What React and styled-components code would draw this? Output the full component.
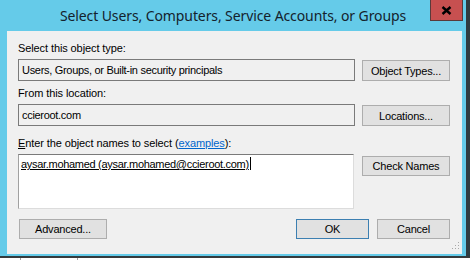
import React from "react";
import styled, { createGlobalStyle } from "styled-components";

const Global = createGlobalStyle`
  html, body { margin: 0; padding: 0; background: #ffffff; }
  body { font-family: "Liberation Sans", Arial, sans-serif; }
  #root { width: 470px; height: 260px; overflow: hidden; }
`;

const Desktop = styled.div`
  width: 470px;
  height: 260px;
  display: flex;
  flex-direction: column;
  background: #ffffff;
  overflow: hidden;
`;

const TopArea = styled.div`
  display: flex;
  height: 257px;
  background: #2f3b40;
`;

const BottomStrip = styled.div`
  flex: 1;
  background: #ffffff;
  border-top: 1px solid #3a3a3a;
  display: flex;
`;

const StripMark = styled.div`
  width: ${p => p.$w}px;
  margin-left: ${p => p.$ml}px;
  border-left: 1px solid #a0a0a0;
`;

const Window = styled.div`
  width: 466px;
  height: 256px;
  background: #65cbe9;
  display: flex;
  flex-direction: column;
  padding: 0 4px 2px 7px;
  box-sizing: border-box;
`;

const TitleBar = styled.div`
  position: relative;
  height: 31px;
  display: flex;
  align-items: center;
  justify-content: center;
  margin-left: -7px;
  margin-right: -4px;
`;

const Title = styled.div`
  font-family: "Noto Sans", "Open Sans", sans-serif;
  font-size: 14px;
  color: #14222c;
  letter-spacing: -0.1px;
`;

const CloseButton = styled.div`
  position: absolute;
  top: 0;
  right: 3px;
  width: 33px;
  height: 21px;
  box-sizing: border-box;
  background: #c75050;
  border: 1px solid #5a3a3a;
  border-top: none;
  display: flex;
  align-items: center;
  justify-content: center;
`;

const Panel = styled.div`
  flex: 1;
  background: #f0f0f0;
  padding: 11px 12px 0 11px;
  display: flex;
  flex-direction: column;
  font-size: 11px;
  letter-spacing: -0.3px;
  color: #000;
`;

const Label = styled.div`
  height: 13px;
  line-height: 13px;
  letter-spacing: -0.1px;
  margin-top: ${p => p.$mt || 0}px;
  white-space: nowrap;
`;

const Row = styled.div`
  display: flex;
  align-items: flex-start;
  gap: 7px;
  margin-top: ${p => p.$mt || 0}px;
`;

const Field = styled.div`
  width: 337px;
  height: 22px;
  box-sizing: border-box;
  border: 1px solid #7a7a7a;
  background: #f0f0f0;
  padding-left: 3px;
  line-height: 20px;
  white-space: nowrap;
`;

const NamesBox = styled.div`
  width: 336px;
  height: 55px;
  box-sizing: border-box;
  background: #ffffff;
  border-top: 1px solid #7a7a7a;
  border-left: 1px solid #a0a0a0;
  border-right: 1px solid #dcdcdc;
  border-bottom: 1px solid #dcdcdc;
  padding: 2px 0 0 2px;
  line-height: 14px;
  white-space: nowrap;
`;

const Resolved = styled.span`
  text-decoration: underline;
  text-underline-offset: 1px;
`;

const Caret = styled.span`
  display: inline-block;
  width: 1px;
  height: 13px;
  background: #000;
  vertical-align: -2px;
  margin-left: 1px;
`;

const Button = styled.div`
  width: ${p => p.$w || 88}px;
  height: ${p => p.$h || 21}px;
  box-sizing: border-box;
  background: #e1e1e1;
  border: 1px solid ${p => (p.$default ? "#3c7fb1" : "#adadad")};
  display: flex;
  align-items: center;
  justify-content: center;
  letter-spacing: -0.2px;
  margin-top: ${p => p.$mt || 0}px;
  margin-left: ${p => p.$ml || 0}px;
  white-space: nowrap;
`;

const Underline = styled.span`
  text-decoration: underline;
`;

const Link = styled.span`
  color: #0066cc;
  text-decoration: underline;
`;

const BottomRow = styled.div`
  display: flex;
  align-items: flex-end;
  margin-top: 10px;
  position: relative;
  height: 20px;
`;

const Spacer = styled.div`
  flex: 1;
`;

const ButtonGroup = styled.div`
  display: flex;
  gap: 8px;
`;

const Grip = styled.svg`
  position: absolute;
  right: -10px;
  bottom: -11px;
`;

export default function App() {
  return (
    <>
      <Global />
      <Desktop>
        <TopArea>
          <Window>
            <TitleBar>
              <Title>Select Users, Computers, Service Accounts, or Groups</Title>
              <CloseButton>
                <svg width="11" height="9" viewBox="0 0 11 9">
                  <path d="M1.5 1 L9.5 8 M9.5 1 L1.5 8" stroke="#000" strokeWidth="2.4" />
                </svg>
              </CloseButton>
            </TitleBar>
            <Panel>
              <Label>Select this object type:</Label>
              <Row $mt={4}>
                <Field>Users, Groups, or Built-in security principals</Field>
                <Button $mt={1}>Object Types...</Button>
              </Row>
              <Label $mt={6}>From this location:</Label>
              <Row $mt={4}>
                <Field>ccieroot.com</Field>
                <Button $mt={1}>Locations...</Button>
              </Row>
              <Label $mt={11}>
                <Underline>E</Underline>nter the object names to select (<Link>examples</Link>):
              </Label>
              <Row $mt={4}>
                <NamesBox>
                  <Resolved>aysar.mohamed (aysar.mohamed@ccieroot.com)</Resolved>
                  <Caret />
                </NamesBox>
                <Button $mt={2} $h={20} $ml={1}>Check Names</Button>
              </Row>
              <BottomRow>
                <Button $h={20} $ml={1}>Advanced...</Button>
                <Spacer />
                <ButtonGroup>
                  <Button $w={73} $h={20} $default>OK</Button>
                  <Button $w={73} $h={20}>Cancel</Button>
                </ButtonGroup>
                <Grip width="8" height="8" viewBox="0 0 8 8">
                  <rect x="6" y="0" width="1" height="1" fill="#a8a8a8" />
                  <rect x="3" y="3" width="1" height="1" fill="#a8a8a8" />
                  <rect x="6" y="3" width="1" height="1" fill="#a8a8a8" />
                  <rect x="0" y="6" width="1" height="1" fill="#a8a8a8" />
                  <rect x="3" y="6" width="1" height="1" fill="#a8a8a8" />
                  <rect x="6" y="6" width="1" height="1" fill="#a8a8a8" />
                </Grip>
              </BottomRow>
            </Panel>
          </Window>
        </TopArea>
        <BottomStrip>
          <StripMark $ml={20} $w={1} />
          <StripMark $ml={55} $w={1} />
        </BottomStrip>
      </Desktop>
    </>
  );
}
